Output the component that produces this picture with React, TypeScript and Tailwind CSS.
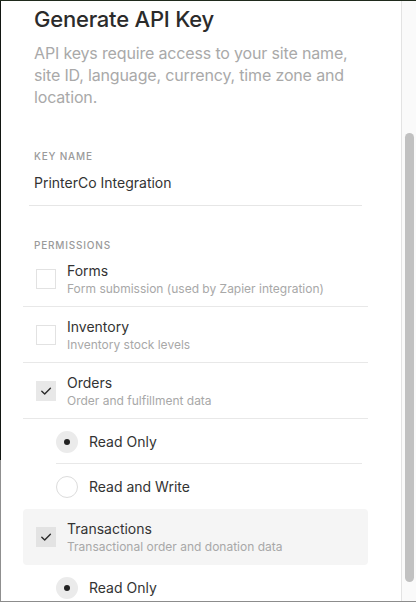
import React from "react";

function Check() {
  return (
    <svg width="20" height="20" viewBox="0 0 20 20" fill="none">
      <path d="M5.8 10.2 L8.7 13.1 L14.4 7.3" stroke="#2b2b2b" strokeWidth="1.4" strokeLinecap="round" strokeLinejoin="round" />
    </svg>
  );
}

function Row({ title, sub, checked, card }: { title: string; sub: string; checked?: boolean; card?: boolean }) {
  return (
    <div
      className={
        card
          ? "w-[345px] flex items-center pl-[13px] pt-[10px] pb-[10px] bg-[#f5f5f5] rounded-[4px]"
          : "w-[345px] flex items-center pl-[13px] pt-[10px] pb-[9px] border-b border-[#e8e8e8]"
      }
    >
      {checked ? (
        <div className={card ? "w-[20px] h-[20px] bg-[#e3e3e3] flex items-center justify-center" : "w-[20px] h-[20px] bg-[#e8e8e8] flex items-center justify-center"}>
          <Check />
        </div>
      ) : (
        <div className="w-[20px] h-[20px] border border-[#e2e2e2] bg-white" />
      )}
      <div className="ml-[11px] flex flex-col">
        <div className="text-[14px] leading-[20px] text-[#333333]">{title}</div>
        <div className="text-[12px] leading-[16px] text-[#a8a8a8]">{sub}</div>
      </div>
    </div>
  );
}

function Radio({ label, selected, border }: { label: string; selected?: boolean; border?: boolean }) {
  return (
    <div className={border ? "ml-[33px] w-[306px] h-[45px] pt-[1px] flex items-center border-b border-[#e8e8e8]" : "ml-[33px] w-[306px] h-[45px] pt-[1px] flex items-center"}>
      {selected ? (
        <div className="w-[22px] h-[22px] rounded-full bg-[#ebebeb] flex items-center justify-center">
          <div className="w-[6px] h-[6px] rounded-full bg-[#222222]" />
        </div>
      ) : (
        <div className="w-[22px] h-[22px] rounded-full border border-[#dcdcdc] bg-white" />
      )}
      <div className="ml-[11px] text-[14px] leading-[20px] text-[#333333]">{label}</div>
    </div>
  );
}

export default function App() {
  return (
    <div className="w-[416px] h-[602px] bg-white flex flex-col overflow-hidden font-['Inter',sans-serif]">
      <div className="h-px bg-[#1f2a1c] shrink-0" />
      <div className="flex flex-1 min-h-0">
        <div className="w-px shrink-0 bg-[linear-gradient(to_bottom,#121612_0px,#121612_459px,#8f8f8f_459px)]" />
        <div className="w-[400px] shrink-0 overflow-hidden pl-[22px] pt-[4px]">
          <div className="px-[11px]">
            <h1 className="text-[22px] leading-[28px] font-medium text-[#2b2b2b] tracking-[-0.01em]">Generate API Key</h1>
            <p className="mt-[9px] max-w-[330px] text-[16px] leading-[22px] text-[#a9a9a9] tracking-[-0.01em]">
              API keys require access to your site name, site ID, language, currency, time zone and location.
            </p>
            <div className="mt-[41px] text-[10px] leading-[14px] tracking-[0.08em] font-medium text-[#9a9a9a]">KEY NAME</div>
          </div>
          <div className="mt-[10px] ml-[6px] w-[333px] pl-[5px] pb-[12px] border-b border-[#e6e6e6] text-[14px] leading-[20px] text-[#333333]">
            PrinterCo Integration
          </div>
          <div className="mt-[34px] px-[11px] text-[10px] leading-[11px] tracking-[0.08em] font-medium text-[#9a9a9a]">PERMISSIONS</div>
          <div className="flex flex-col">
            <Row title="Forms" sub="Form submission (used by Zapier integration)" />
            <Row title="Inventory" sub="Inventory stock levels" />
            <Row title="Orders" sub="Order and fulfillment data" checked />
            <Radio label="Read Only" selected border />
            <Radio label="Read and Write" />
            <Row title="Transactions" sub="Transactional order and donation data" checked card />
            <Radio label="Read Only" selected />
          </div>
        </div>
        <div className="flex-1 border-l border-[#e3e3e3] bg-[#fafafa] pt-[132px] pl-[3px]">
          <div className="w-[9px] h-[449px] rounded-full bg-[#c1c1c1]" />
        </div>
      </div>
      <div className="h-px bg-[#8c8c8c] shrink-0" />
    </div>
  );
}
